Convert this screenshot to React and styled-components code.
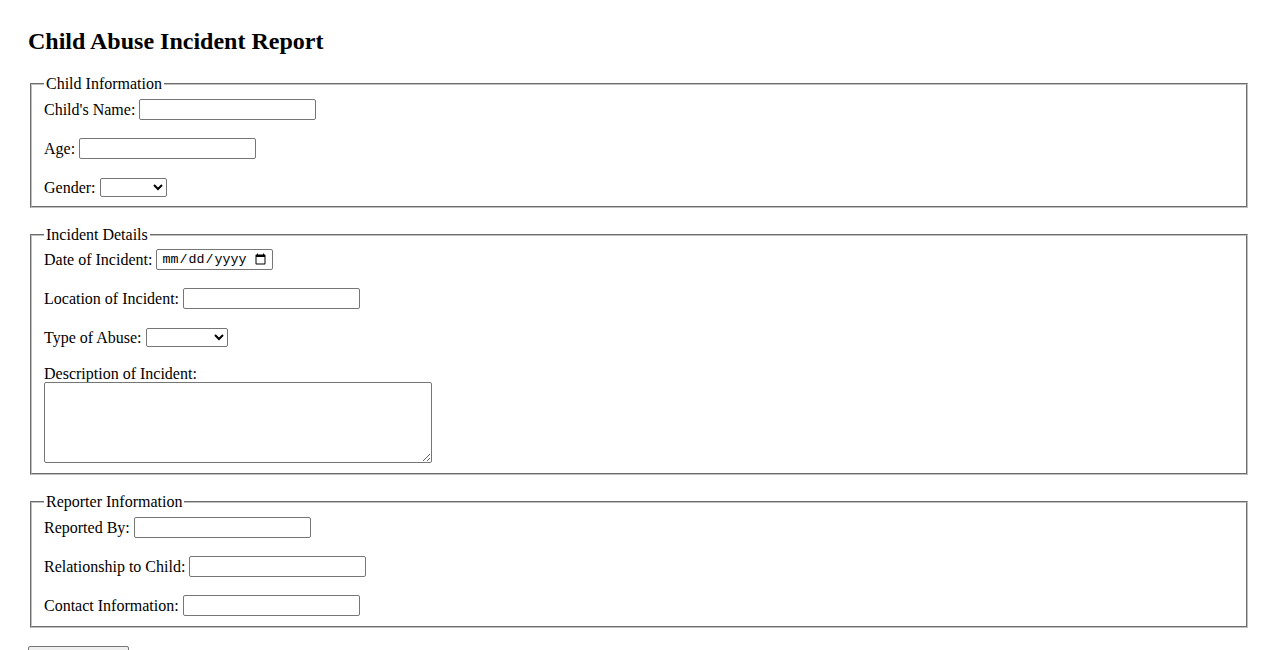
import React from "react";
import styled, { createGlobalStyle } from "styled-components";

const Global = createGlobalStyle`
  html, body { margin: 0; padding: 0; background: #fff; }
  body { font-family: "Liberation Serif", "Times New Roman", serif; font-size: 16px; color: #000; }
`;

const Page = styled.div`
  padding: 0 28px;
`;

const Title = styled.h2`
  margin: 28px 0 20px;
  font-size: 24px;
  font-weight: bold;
  line-height: 27px;
`;

const Form = styled.form`
  display: flex;
  flex-direction: column;
  gap: 18px;
`;

const Section = styled.fieldset`
  margin: 0 2px;
  padding: ${(p) => p.$pt || 6}px 12px ${(p) => p.$pb || 10}px;
  border: 2px groove rgb(192, 192, 192);
  display: flex;
  flex-direction: column;
  gap: 18px;
  min-width: 0;
`;

const Legend = styled.legend`
  padding: 0 2px;
  font-size: 16px;
  line-height: 18px;
`;

const Row = styled.div`
  display: flex;
  align-items: center;
  gap: 4px;
  height: 21px;
  line-height: 18px;
`;

const Stack = styled.div`
  display: flex;
  flex-direction: column;
  align-items: flex-start;
`;

const Label = styled.label`
  font-size: 16px;
  line-height: ${(p) => (p.$block ? 16 : 18)}px;
`;

const TextInput = styled.input`
  box-sizing: border-box;
  width: ${(p) => p.$w || 177}px;
  height: 21px;
  margin: 0;
  padding: 1px 2px;
  border: 1px solid #767676;
  border-radius: 2px;
  font: 13.33px "Liberation Sans", Arial, sans-serif;
  background: #fff;
`;

const DateInput = styled.input`
  box-sizing: border-box;
  width: 117px;
  height: 21px;
  margin: 0;
  padding: 1px 3px 1px 4px;
  border: 1px solid #767676;
  border-radius: 2px;
  font: 13.33px "Liberation Mono", "DejaVu Sans Mono", monospace;
  background: #fff;
`;

const Select = styled.select`
  box-sizing: border-box;
  width: ${(p) => p.$w}px;
  height: 19px;
  margin: 0;
  padding: 0 2px;
  border: 1px solid #767676;
  border-radius: 2px;
  font: 13.33px "Liberation Sans", Arial, sans-serif;
  background: #fff;
`;

const TextArea = styled.textarea`
  box-sizing: border-box;
  width: 388px;
  height: 81px;
  margin: 0;
  padding: 2px;
  border: 1px solid #767676;
  border-radius: 2px;
  font: 13.33px "Liberation Mono", monospace;
  resize: both;
`;

const Submit = styled.button`
  box-sizing: border-box;
  width: 101px;
  height: 22px;
  margin: 0;
  padding: 1px 6px;
  border: 1px solid #767676;
  border-radius: 2px;
  background: #efefef;
  font: 13.33px "Liberation Sans", Arial, sans-serif;
  align-self: flex-start;
`;

export default function App() {
  return (
    <Page>
      <Global />
      <Title>Child Abuse Incident Report</Title>
      <Form onSubmit={(e) => e.preventDefault()}>
        <Section $pb={8}>
          <Legend>Child Information</Legend>
          <Row>
            <Label htmlFor="cn">Child's Name:</Label>
            <TextInput id="cn" type="text" />
          </Row>
          <Row>
            <Label htmlFor="age">Age:</Label>
            <TextInput id="age" type="text" />
          </Row>
          <Row>
            <Label htmlFor="gender">Gender:</Label>
            <Select id="gender" $w={67}>
              <option value=""></option>
              <option>Male</option>
              <option>Female</option>
              <option>Other</option>
            </Select>
          </Row>
        </Section>

        <Section $pt={5} $pb={10}>
          <Legend>Incident Details</Legend>
          <Row>
            <Label htmlFor="date">Date of Incident:</Label>
            <DateInput id="date" type="date" />
          </Row>
          <Row>
            <Label htmlFor="loc">Location of Incident:</Label>
            <TextInput id="loc" type="text" />
          </Row>
          <Row>
            <Label htmlFor="type">Type of Abuse:</Label>
            <Select id="type" $w={82}>
              <option value=""></option>
              <option>Physical</option>
              <option>Emotional</option>
              <option>Sexual</option>
              <option>Neglect</option>
            </Select>
          </Row>
          <Stack>
            <Label htmlFor="desc" $block>Description of Incident:</Label>
            <TextArea id="desc" />
          </Stack>
        </Section>

        <Section $pb={10}>
          <Legend>Reporter Information</Legend>
          <Row>
            <Label htmlFor="rb">Reported By:</Label>
            <TextInput id="rb" type="text" />
          </Row>
          <Row>
            <Label htmlFor="rel">Relationship to Child:</Label>
            <TextInput id="rel" type="text" />
          </Row>
          <Row>
            <Label htmlFor="contact">Contact Information:</Label>
            <TextInput id="contact" type="text" />
          </Row>
        </Section>

        <Submit type="submit">Submit Report</Submit>
      </Form>
    </Page>
  );
}
